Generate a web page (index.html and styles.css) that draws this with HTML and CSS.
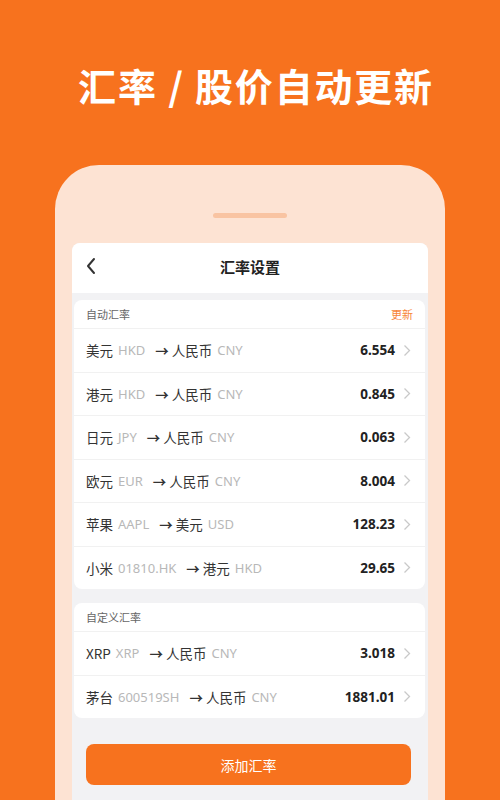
FILE: index.html
```html
<!DOCTYPE html>
<html lang="zh">
<head>
<meta charset="utf-8">
<link rel="stylesheet" href="styles.css">
</head>
<body>
<div class="page">
  <h1 class="title">汇率 / 股价自动更新</h1>
  <div class="phone">
    <div class="notch"></div>
    <div class="screen">
      <div class="navbar">
        <svg class="back" width="12" height="18" viewBox="0 0 12 18"><path d="M9 2 L3 9 L9 16" fill="none" stroke="#333" stroke-width="2" stroke-linecap="round" stroke-linejoin="round"/></svg>
        <span class="nav-title">汇率设置</span>
      </div>
      <div class="content">
        <div class="card">
          <div class="card-head"><span>自动汇率</span><span class="update">更新</span></div>
          <div class="row"><span class="pair">美元<i>HKD</i><b>→</b>人民币<i>CNY</i></span><span class="val">6.554</span><svg class="chev" width="8" height="13" viewBox="0 0 8 13"><path d="M1.5 1.5 L6.5 6.5 L1.5 11.5" fill="none" stroke="#c9c9c9" stroke-width="1.3"/></svg></div>
          <div class="row"><span class="pair">港元<i>HKD</i><b>→</b>人民币<i>CNY</i></span><span class="val">0.845</span><svg class="chev" width="8" height="13" viewBox="0 0 8 13"><path d="M1.5 1.5 L6.5 6.5 L1.5 11.5" fill="none" stroke="#c9c9c9" stroke-width="1.3"/></svg></div>
          <div class="row"><span class="pair">日元<i>JPY</i><b>→</b>人民币<i>CNY</i></span><span class="val">0.063</span><svg class="chev" width="8" height="13" viewBox="0 0 8 13"><path d="M1.5 1.5 L6.5 6.5 L1.5 11.5" fill="none" stroke="#c9c9c9" stroke-width="1.3"/></svg></div>
          <div class="row"><span class="pair">欧元<i>EUR</i><b>→</b>人民币<i>CNY</i></span><span class="val">8.004</span><svg class="chev" width="8" height="13" viewBox="0 0 8 13"><path d="M1.5 1.5 L6.5 6.5 L1.5 11.5" fill="none" stroke="#c9c9c9" stroke-width="1.3"/></svg></div>
          <div class="row"><span class="pair">苹果<i>AAPL</i><b>→</b>美元<i>USD</i></span><span class="val">128.23</span><svg class="chev" width="8" height="13" viewBox="0 0 8 13"><path d="M1.5 1.5 L6.5 6.5 L1.5 11.5" fill="none" stroke="#c9c9c9" stroke-width="1.3"/></svg></div>
          <div class="row"><span class="pair">小米<i>01810.HK</i><b>→</b>港元<i>HKD</i></span><span class="val">29.65</span><svg class="chev" width="8" height="13" viewBox="0 0 8 13"><path d="M1.5 1.5 L6.5 6.5 L1.5 11.5" fill="none" stroke="#c9c9c9" stroke-width="1.3"/></svg></div>
        </div>
        <div class="card">
          <div class="card-head"><span>自定义汇率</span></div>
          <div class="row"><span class="pair">XRP<i>XRP</i><b>→</b>人民币<i>CNY</i></span><span class="val">3.018</span><svg class="chev" width="8" height="13" viewBox="0 0 8 13"><path d="M1.5 1.5 L6.5 6.5 L1.5 11.5" fill="none" stroke="#c9c9c9" stroke-width="1.3"/></svg></div>
          <div class="row"><span class="pair">茅台<i>600519SH</i><b>→</b>人民币<i>CNY</i></span><span class="val">1881.01</span><svg class="chev" width="8" height="13" viewBox="0 0 8 13"><path d="M1.5 1.5 L6.5 6.5 L1.5 11.5" fill="none" stroke="#c9c9c9" stroke-width="1.3"/></svg></div>
        </div>
        <button class="add">添加汇率</button>
      </div>
    </div>
  </div>
</div>
</body>
</html>
```
FILE: styles.css
```css
* { box-sizing: border-box; }
html, body { margin: 0; padding: 0; }
body {
  width: 500px;
  height: 800px;
  overflow: hidden;
  background: #f7721e;
  font-family: "Noto Sans CJK SC", "Noto Sans", sans-serif;
}
.page {
  display: flex;
  flex-direction: column;
  align-items: center;
  height: 800px;
}
.title {
  margin: 60px 0 0;
  height: 50px;
  line-height: 50px;
  font-size: 38px;
  font-weight: 700;
  color: #fff;
  letter-spacing: 1.8px;
  padding-left: 12px;
}
.phone {
  margin-top: 55px;
  width: 390px;
  flex: 1;
  background: #fde3d3;
  border-radius: 44px 44px 0 0;
  padding: 0 17px;
  display: flex;
  flex-direction: column;
}
.notch {
  margin: 48px auto 0;
  width: 74px;
  height: 5px;
  border-radius: 3px;
  background: #f9c4a2;
}
.screen {
  margin-top: 25px;
  flex: 1;
  background: #f2f2f4;
  border-radius: 8px 8px 0 0;
  display: flex;
  flex-direction: column;
  overflow: hidden;
}
.navbar {
  position: relative;
  height: 50px;
  background: #fff;
  display: flex;
  align-items: center;
  justify-content: center;
  padding-bottom: 4px;
}
.back {
  position: absolute;
  left: 13px;
  top: 14px;
}
.nav-title {
  font-size: 15px;
  font-weight: 700;
  color: #222;
}
.content {
  padding: 7px 3px 0 2px;
  display: flex;
  flex-direction: column;
}
.card {
  background: #fff;
  border-radius: 8px;
  margin-bottom: 14px;
}
.card-head {
  height: 28px;
  padding: 0 12px;
  display: flex;
  align-items: center;
  justify-content: space-between;
  font-size: 11px;
  color: #666;
}
.update { color: #f7853a; }
.row {
  height: 43.5px;
  border-top: 1px solid #f1f1f1;
  padding: 0 14px 0 12px;
  display: flex;
  align-items: center;
}
.pair {
  flex: 1;
  font-size: 13.5px;
  color: #333;
  white-space: nowrap;
  display: flex;
  align-items: center;
}
.pair i {
  font-style: normal;
  color: #b8b8b8;
  font-family: "Noto Sans", sans-serif;
  font-size: 13px;
  margin: 0 3px 0 5px;
}
.pair b {
  font-weight: 700;
  color: #333;
  margin: 0 3px 0 7px;
}
.val {
  font-size: 13.5px;
  font-weight: 700;
  color: #222;
  margin-right: 8px;
  font-family: "Noto Sans", sans-serif;
}
.chev { display: block; }
.add {
  margin: 12px 14px 0 12px;
  height: 41px;
  border: none;
  border-radius: 8px;
  background: #f7721e;
  color: #fff;
  font-family: "Noto Sans CJK SC", sans-serif;
  font-size: 14px;
}
```
